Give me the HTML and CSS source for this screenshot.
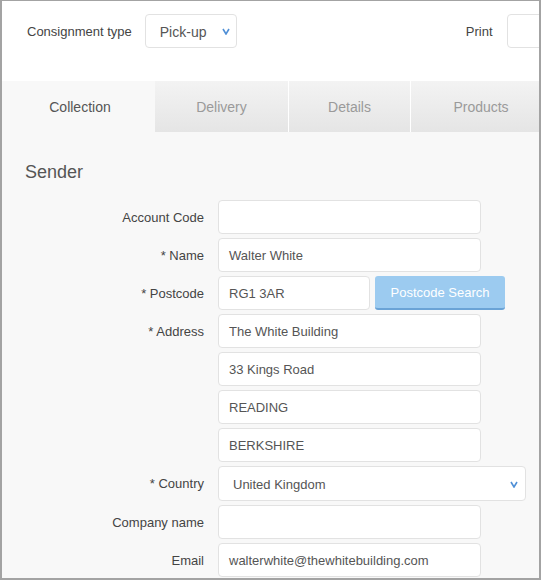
FILE: index.html
```html
<!DOCTYPE html>
<html lang="en">
<head>
    <meta charset="UTF-8">
    <title>New Consignment</title>
    <link rel="stylesheet" href="styles.css">
</head>
<body>

<div class="frame">

    <div class="topbar">
        <span class="top-label">Consignment type</span>
        <div class="select select-type">
            <span>Pick-up</span>
            <svg class="chev" width="8" height="7" viewBox="0 0 8 7"><path d="M1 1 L4 6 L7 1" fill="none" stroke="#4f8fd6" stroke-width="1.6"/></svg>
        </div>
        <span class="top-label print-label">Print</span>
        <div class="select select-print"></div>
    </div>

    <div class="content">
        <div class="tabs">
            <div class="tab active tab-collection">Collection</div>
            <div class="tab tab-delivery">Delivery</div>
            <div class="tab tab-details">Details</div>
            <div class="tab tab-products">Products</div>
        </div>

        <h2 class="heading">Sender</h2>

        <div class="form">
            <label>Account Code</label>
            <div class="input"></div>

            <label>* Name</label>
            <div class="input">Walter White</div>

            <label>* Postcode</label>
            <div class="postcode-row">
                <div class="input input-short">RG1 3AR</div>
                <button class="btn-search">Postcode Search</button>
            </div>

            <label>* Address</label>
            <div class="input">The White Building</div>

            <label></label>
            <div class="input">33 Kings Road</div>

            <label></label>
            <div class="input">READING</div>

            <label></label>
            <div class="input">BERKSHIRE</div>

            <label>* Country</label>
            <div class="select select-country">
                <span>United Kingdom</span>
                <svg class="chev" width="8" height="7" viewBox="0 0 8 7"><path d="M1 1 L4 6 L7 1" fill="none" stroke="#4f8fd6" stroke-width="1.6"/></svg>
            </div>

            <label>Company name</label>
            <div class="input"></div>

            <label>Email</label>
            <div class="input">walterwhite@thewhitebuilding.com</div>
        </div>
    </div>

</div>

</body>
</html>
```

FILE: styles.css
```css
html, body {
    margin: 0;
    padding: 0;
}
body {
    font-family: "Liberation Sans", Arial, sans-serif;
    font-size: 13px;
    color: #555;
}
.frame {
    width: 541px;
    height: 580px;
    box-sizing: border-box;
    border-style: solid;
    border-color: #a3a3a3;
    border-width: 1px 2px 2px 2px;
    overflow: hidden;
    background: #f8f8f8;
}
.topbar {
    height: 80px;
    box-sizing: border-box;
    background: #fff;
    display: flex;
    align-items: flex-start;
    padding: 13px 0 0 25px;
    white-space: nowrap;
}
.top-label {
    color: #444;
    line-height: 33px;
    padding-top: 1px;
}
.print-label {
    margin-left: 229px;
}
.select {
    display: flex;
    align-items: center;
    justify-content: space-between;
    height: 34px;
    box-sizing: border-box;
    border: 1px solid #e2e2e2;
    border-radius: 4px;
    background: #fff;
    padding: 1px 6px 0 14px;
    flex-shrink: 0;
}
.select-type {
    width: 92px;
    margin-left: 13px;
    font-size: 14px;
}
.select-print {
    width: 80px;
    margin-left: 14px;
}
.chev {
    display: block;
}
.content {
    background: #f8f8f8;
}
.tabs {
    display: flex;
    height: 51px;
    padding-left: 3px;
    white-space: nowrap;
}
.tab {
    display: flex;
    align-items: center;
    justify-content: center;
    flex-shrink: 0;
    font-size: 14px;
    color: #9a9a9a;
    background: linear-gradient(#f3f3f3, #e5e5e5);
}
.tab.active {
    background: #f8f8f8;
    color: #555;
}
.tab-collection { width: 150px; }
.tab-delivery { width: 133px; }
.tab-details { width: 121px; border-left: 1px solid #fff; }
.tab-products { width: 140px; border-left: 1px solid #fff; }
.heading {
    margin: 30px 0 18px 23px;
    font-size: 18px;
    font-weight: normal;
    line-height: 20px;
    color: #555;
}
.form {
    display: grid;
    grid-template-columns: 202px 308px;
    column-gap: 14px;
    row-gap: 4px;
}
.form label {
    text-align: right;
    line-height: 33px;
    padding-top: 1px;
    color: #444;
}
.input {
    width: 263px;
    height: 34px;
    box-sizing: border-box;
    border: 1px solid #e2e2e2;
    border-radius: 4px;
    background: #fff;
    padding: 1px 10px 0;
    line-height: 31px;
    color: #555;
    white-space: nowrap;
}
.postcode-row {
    display: flex;
    gap: 5px;
}
.input-short {
    width: 152px;
}
.btn-search {
    width: 130px;
    height: 34px;
    border: none;
    border-bottom: 2px solid #6aa3d6;
    border-radius: 3px;
    background: #9ccbf0;
    color: #fff;
    font-family: "Liberation Sans", Arial, sans-serif;
    font-size: 13px;
    padding: 0;
}
.select-country {
    width: 308px;
    height: 35px;
    padding-left: 14px;
    padding-right: 7px;
}
```
